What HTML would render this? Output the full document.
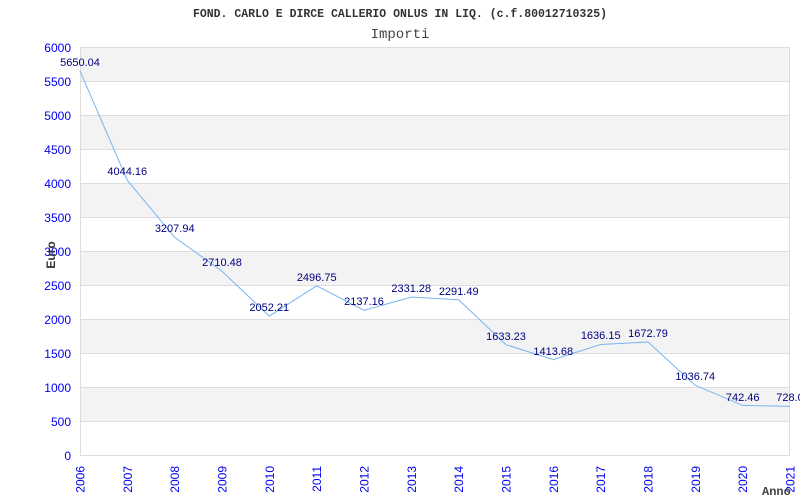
<!DOCTYPE html>
<html><head><meta charset="utf-8"><style>
html,body{margin:0;padding:0;background:#fff;width:800px;height:500px;overflow:hidden}
svg text{font-family:"Liberation Sans",sans-serif}
</style></head><body>
<svg width="800" height="500" xmlns="http://www.w3.org/2000/svg">
<g fill="#f3f3f3">
<rect x="80" y="47" width="710" height="34.1"/>
<rect x="80" y="115.2" width="710" height="34.1"/>
<rect x="80" y="183.3" width="710" height="34.1"/>
<rect x="80" y="251.5" width="710" height="34.1"/>
<rect x="80" y="319.7" width="710" height="34.1"/>
<rect x="80" y="387.8" width="710" height="34.1"/>
</g>
<g stroke="#dddddd" stroke-width="1">
<line x1="80" x2="790" y1="47.5" y2="47.5"/>
<line x1="80" x2="790" y1="81.5" y2="81.5"/>
<line x1="80" x2="790" y1="115.5" y2="115.5"/>
<line x1="80" x2="790" y1="149.5" y2="149.5"/>
<line x1="80" x2="790" y1="183.5" y2="183.5"/>
<line x1="80" x2="790" y1="217.5" y2="217.5"/>
<line x1="80" x2="790" y1="251.5" y2="251.5"/>
<line x1="80" x2="790" y1="285.5" y2="285.5"/>
<line x1="80" x2="790" y1="319.5" y2="319.5"/>
<line x1="80" x2="790" y1="353.5" y2="353.5"/>
<line x1="80" x2="790" y1="387.5" y2="387.5"/>
<line x1="80" x2="790" y1="421.5" y2="421.5"/>
<line x1="80" x2="790" y1="455.5" y2="455.5"/>
<line x1="80.5" x2="80.5" y1="47" y2="456"/>
<line x1="789.5" x2="789.5" y1="47" y2="456"/>
</g>
<text x="400" y="17" text-anchor="middle" font-size="11.5" font-weight="bold" fill="#333" style="font-family:'Liberation Mono',monospace">FOND. CARLO E DIRCE CALLERIO ONLUS IN LIQ. (c.f.80012710325)</text>
<text x="400" y="38" text-anchor="middle" font-size="14" fill="#444" style="font-family:'Liberation Mono',monospace">Importi</text>
<g font-size="12" fill="#0000ee" text-anchor="end">
<text x="71" y="52">6000</text><text x="71" y="86">5500</text><text x="71" y="120">5000</text><text x="71" y="154">4500</text><text x="71" y="188">4000</text><text x="71" y="222">3500</text><text x="71" y="256">3000</text><text x="71" y="290">2500</text><text x="71" y="324">2000</text><text x="71" y="358">1500</text><text x="71" y="392">1000</text><text x="71" y="426">500</text><text x="71" y="460">0</text>
</g>
<text transform="translate(55,255) rotate(-90)" text-anchor="middle" font-size="12" font-weight="bold" fill="#333">Euro</text>
<g font-size="12" fill="#0000ee" text-anchor="end">
<text transform="translate(84.5,466) rotate(-90)">2006</text>
<text transform="translate(131.8,466) rotate(-90)">2007</text>
<text transform="translate(179.2,466) rotate(-90)">2008</text>
<text transform="translate(226.5,466) rotate(-90)">2009</text>
<text transform="translate(273.8,466) rotate(-90)">2010</text>
<text transform="translate(321.2,466) rotate(-90)">2011</text>
<text transform="translate(368.5,466) rotate(-90)">2012</text>
<text transform="translate(415.8,466) rotate(-90)">2013</text>
<text transform="translate(463.2,466) rotate(-90)">2014</text>
<text transform="translate(510.5,466) rotate(-90)">2015</text>
<text transform="translate(557.8,466) rotate(-90)">2016</text>
<text transform="translate(605.2,466) rotate(-90)">2017</text>
<text transform="translate(652.5,466) rotate(-90)">2018</text>
<text transform="translate(699.8,466) rotate(-90)">2019</text>
<text transform="translate(747.2,466) rotate(-90)">2020</text>
<text transform="translate(794.5,466) rotate(-90)">2021</text>
</g>
<text x="762" y="495" font-size="12" font-weight="bold" fill="#444" style="font-family:'Liberation Mono',monospace">Anno</text>
<polyline fill="none" stroke="#77b5f0" stroke-width="1" points="80,70.9 127.3,180.3 174.7,237.3 222,271.2 269.3,316.1 316.7,285.8 364,310.3 411.3,297.1 458.7,299.8 506,344.7 553.3,359.6 600.7,344.5 648,342 695.3,385.3 742.7,405.4 790,406.4"/>
<g font-size="11" fill="#000080" text-anchor="middle">
<text x="80" y="66">5650.04</text>
<text x="127.3" y="175">4044.16</text>
<text x="174.7" y="232">3207.94</text>
<text x="222" y="266">2710.48</text>
<text x="269.3" y="311">2052.21</text>
<text x="316.7" y="281">2496.75</text>
<text x="364" y="305">2137.16</text>
<text x="411.3" y="292">2331.28</text>
<text x="458.7" y="295">2291.49</text>
<text x="506" y="340">1633.23</text>
<text x="553.3" y="355">1413.68</text>
<text x="600.7" y="339">1636.15</text>
<text x="648" y="337">1672.79</text>
<text x="695.3" y="380">1036.74</text>
<text x="742.7" y="401">742.46</text>
<text x="790" y="401">728.0</text>
</g>
</svg>
</body></html>
